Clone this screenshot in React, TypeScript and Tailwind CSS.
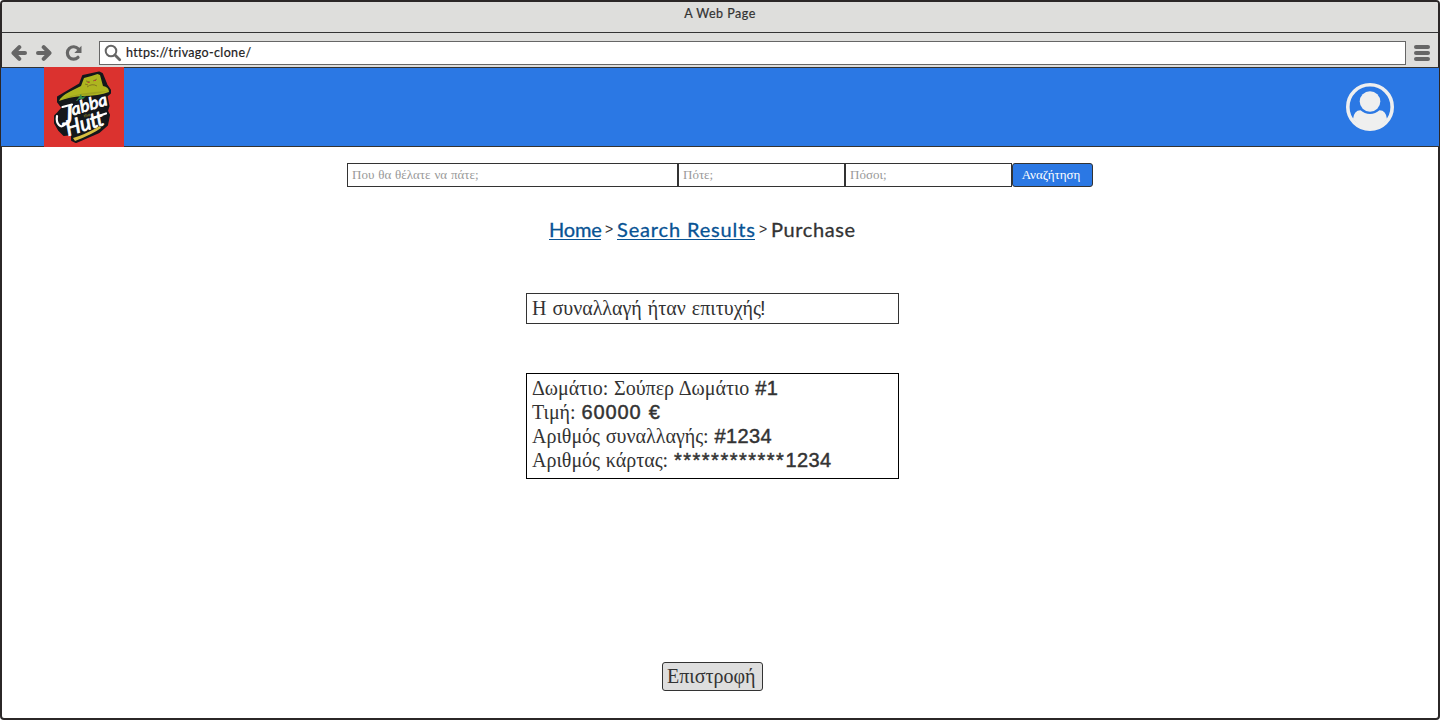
import React from "react";

const sans = "font-['Lato','Liberation_Sans',sans-serif]";
const serif = "font-['Liberation_Serif',serif]";

function Logo() {
  return (
    <svg className="-mt-px ml-[43px] h-20 w-20 shrink-0" viewBox="0 0 80 80">
      <rect width="80" height="80" fill="#db322f" />
      <path
        d="M14 30 L36 17 L39 9 L55 5.500 L58 7 L62.500 18 L66 23 L66 26 L62.500 29 L64.500 39 L63 44 L65 48 L63 58 L55 65 L32 75 L28 73 L28 67 L20 68 L15 63 L11 56 L11 49 L14 46 L18.500 41 L14 35 Z"
        fill="#14171b"
        stroke="#14171b"
        strokeWidth="2"
        strokeLinejoin="round"
      />
      <path d="M15 34 Q17 29 27 24 L37 19 L40 11 Q48 9 53.500 7 L56 8 L59 19 Q65 20 65 25 Q55 29 38 29 Q25 30 15 34Z" fill="#aeb51f" />
      <path d="M18 32 Q36 25 64 24 Q50 28 37 28Z" fill="#8f9420" opacity=".6" />
      <path d="M42 14 l4 1 M49 14 l4-2 M43 20 q5-4 10-1 M41 17 l3 1" stroke="#79691f" fill="none" strokeWidth=".8" />
      <path d="M43.500 15.500 h2 M50 13.500 h2" stroke="#b54831" strokeWidth="1" />
      <path d="M32 34 l3-4 l2-3 l1 3 l4-1 l-3 3 l-4 0 l-2 2Z" fill="#35894b" />
      <g className="font-['Lato','Liberation_Sans',sans-serif] italic" fill="#fff" stroke="#fff" strokeWidth=".8">
        <text transform="translate(19 58) rotate(-6)" fontSize="26" textLength="11" lengthAdjust="spacingAndGlyphs">J</text>
        <text transform="translate(29 48.500) rotate(-17)" fontSize="17" textLength="37" lengthAdjust="spacingAndGlyphs">abba</text>
        <text transform="translate(24 69) rotate(-17)" fontSize="21" textLength="39" lengthAdjust="spacingAndGlyphs">Hutt</text>
      </g>
      <path d="M18.500 40 L28 37.500 M21 57 Q18 61 15 58 Q12 55 13 49 M50 50.500 L62 46.500" fill="none" stroke="#fff" strokeWidth="2.200" strokeLinecap="round" />
      <text x="40" y="50.500" fontSize="4.500" fill="#807329" className="font-['Liberation_Sans',sans-serif] font-bold" transform="rotate(-12 40 50)">the</text>
      <path d="M29 71 Q40 68 56 59 L57 61 Q49 67 31 74Z" fill="#d7bd40" />
    </svg>
  );
}

function Arrow({ back = false }: { back?: boolean }) {
  return (
    <svg className={back ? "h-4 w-4" : "h-4 w-4 -scale-x-100"} viewBox="0 0 16 16" fill="none" stroke="#666" strokeWidth="4">
      <path d="M8.300 2.200 L2.500 8 L8.300 13.800 M3 8 H14" strokeLinecap="round" strokeLinejoin="round" />
    </svg>
  );
}

function Toolbar() {
  return (
    <div className="flex h-[34px] items-start bg-[#dededc] pr-2 pl-[9px]">
      <div className="mt-3 flex">
        <Arrow back />
        <div className="w-[9px]" />
        <Arrow />
        <svg className="ml-[13px] h-[17px] w-[18px]" viewBox="0 0 18 17">
          <path d="M13 12.300 A6.200 6.200 0 1 1 13.200 3.800" fill="none" stroke="#666" strokeWidth="3.200" strokeLinecap="round" />
          <path d="M16.500 .8 V8 H9.300Z" fill="#666" />
        </svg>
      </div>
      <div className="mt-2 ml-[16px] flex h-6 w-[1307px] shrink-0 items-center border border-[#666] bg-white">
        <svg className="ml-1 h-[18px] w-[18px]" viewBox="0 0 18 18" fill="none" stroke="#666">
          <circle cx="7" cy="7" r="5.300" strokeWidth="2" />
          <path d="M11 11 L15.700 15.700" strokeWidth="2.800" strokeLinecap="round" />
        </svg>
        <span className={`${sans} ml-1 text-[12.5px] leading-[22px] tracking-[0.35px] text-[#222] [-webkit-text-stroke:0.2px_#222]`}>https://trivago-clone/</span>
      </div>
      <div className="mt-3 ml-2 flex w-4 shrink-0 flex-col gap-[2px]">
        <div className="h-1 rounded-full bg-[#666]" />
        <div className="h-1 rounded-full bg-[#666]" />
        <div className="h-1 rounded-full bg-[#666]" />
      </div>
    </div>
  );
}

function Header() {
  return (
    <header className="-mr-px -ml-px flex h-20 items-start border-y border-[#333] bg-[#2b78e4]">
      <Logo />
      <svg className="mt-[15px] mr-[45px] ml-auto h-12 w-12" viewBox="0 0 48 48">
        <circle cx="24" cy="24" r="22.200" fill="none" stroke="#efefef" strokeWidth="3.600" />
        <circle cx="24" cy="18.500" r="10.300" fill="#efefef" />
        <path d="M7 36 Q8 27.500 14.500 27.300 Q18.500 31 24 31 Q29.500 31 33.500 27.300 Q40 27.500 41 36 Q34 46 24 46 Q14 46 7 36Z" fill="#efefef" />
      </svg>
    </header>
  );
}

function SearchBar() {
  const field = `${serif} h-6 border border-[#333] pl-1 text-[13px] leading-[22px] [word-spacing:0.6px] text-[#999]`;
  return (
    <div className="mt-4 ml-[345px] flex">
      <div className={`${field} w-[331px]`}>Που θα θέλατε να πάτε;</div>
      <div className={`${field} w-[167px]`}>Πότε;</div>
      <div className={`${field} w-[167px]`}>Πόσοι;</div>
      <button className={`${serif} h-6 w-[81px] rounded-[3px] border border-[#333] bg-[#2b78e4] pr-[3px] text-[13px] leading-[22px] text-white`}>Αναζήτηση</button>
    </div>
  );
}

function Value({ children }: { children: React.ReactNode }) {
  return <span className="font-['Liberation_Sans',sans-serif] tracking-[0.4px] [-webkit-text-stroke:0.45px_#333]">{children}</span>;
}

export default function App() {
  return (
    <div className="flex h-[720px] w-[1440px] flex-col rounded-[4px] border-2 border-[#2b2727] bg-white">
      <div className={`${sans} h-[31px] rounded-t-[2px] border-b border-[#333] bg-[#dededc] text-center text-[12.5px] leading-[24px] tracking-[0.5px] text-[#333] [-webkit-text-stroke:0.2px_#333]`}>A Web Page</div>
      <Toolbar />
      <Header />
      <SearchBar />
      <nav className={`${sans} mt-7 ml-[547px] flex h-7 items-center text-[20px] whitespace-nowrap text-[#333]`}>
        <span className="w-[52px] border-b border-[#085394] leading-5 tracking-[-0.2px] text-[#085394] [-webkit-text-stroke:0.3px_#085394]">Home</span>
        <span className="w-4 text-center font-['Liberation_Sans',sans-serif] text-[14px]">&gt;</span>
        <span className="w-[138px] border-b border-[#085394] leading-5 tracking-[0.85px] text-[#085394] [-webkit-text-stroke:0.3px_#085394]">Search Results</span>
        <span className="w-4 text-center font-['Liberation_Sans',sans-serif] text-[14px]">&gt;</span>
        <span className="leading-5 tracking-[0.6px] [-webkit-text-stroke:0.3px_#333]">Purchase</span>
      </nav>
      <main className={`${serif} ml-[524px] w-[373px] text-[20px] text-[#333]`}>
        <p className="mt-[50px] h-[31px] border border-[#333] pl-[5px] leading-[29px] [word-spacing:1px]">Η συναλλαγή ήταν επιτυχής<span className="-ml-px font-['Liberation_Sans',sans-serif]">!</span></p>
        <div className="mt-[49px] h-[106px] border border-black pt-[2px] pl-[5px] leading-6 [word-spacing:0.8px] whitespace-nowrap">
          <p>Δωμάτιο: Σούπερ Δωμάτιο <Value>#1</Value></p>
          <p>Τιμή: <Value><span className="tracking-[0.9px]">60000 €</span></Value></p>
          <p>Αριθμός συναλλαγής: <Value>#1234</Value></p>
          <p>Αριθμός κάρτας: <Value><span className="tracking-[1.5px]">************</span>1234</Value></p>
        </div>
      </main>
      <button className={`${serif} mt-[183px] ml-[660px] h-[29px] w-[101px] shrink-0 rounded-[3px] border border-[#333] bg-[#dedede] pl-1 text-left text-[20px] leading-[27px] text-[#333]`}>Επιστροφή</button>
    </div>
  );
}
